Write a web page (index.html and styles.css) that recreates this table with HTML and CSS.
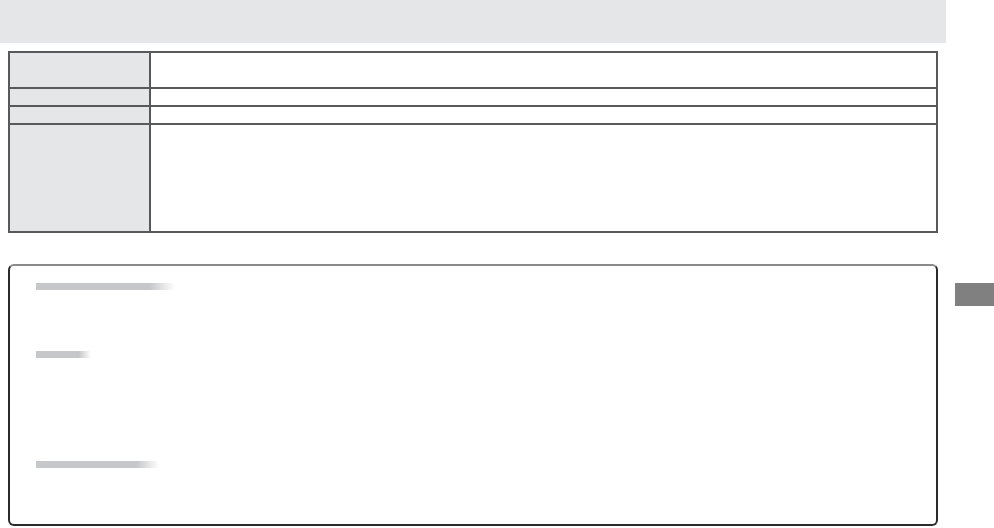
FILE: index.html
```html
<!DOCTYPE html>
<html lang="en">
<head>
    <meta charset="UTF-8">
    <meta name="viewport" content="width=device-width, initial-scale=1.0">
    <title>manual page</title>
    <link rel="stylesheet" href="styles.css">
</head>
<body>
    <div class="page">
        <main class="main">
            <div class="banner"></div>

            <div class="spec">
                <div class="spec-key row-tall"></div>
                <div class="spec-val"></div>
                <div class="spec-key"></div>
                <div class="spec-val"></div>
                <div class="spec-key"></div>
                <div class="spec-val"></div>
                <div class="spec-key row-big"></div>
                <div class="spec-val"></div>
            </div>

            <div class="notes">
                <section class="note note-first">
                    <div class="heading-bar bar-long"></div>
                </section>
                <section class="note note-second">
                    <div class="heading-bar bar-short"></div>
                </section>
                <section class="note">
                    <div class="heading-bar bar-mid"></div>
                </section>
            </div>
        </main>

        <aside class="side">
            <div class="tab"></div>
        </aside>
    </div>
</body>
</html>
```

FILE: styles.css
```css
body {
    font-family: "Liberation Sans", Arial, sans-serif;
    background-color: #fff;
    margin: 0;
    padding: 0;
}

.page {
    display: flex;
    width: 994px;
    height: 528px;
}

.main {
    width: 946px;
    flex: none;
}

.banner {
    height: 43px;
    background-color: #e5e6e8;
}

/* spec table */
.spec {
    display: grid;
    grid-template-columns: 139px 1fr;
    grid-template-rows: 34px 16px 16px 106px;
    gap: 2px;
    padding: 2px;
    width: 926px;
    margin: 8px 0 0 8px;
    background-color: #58595b;
}

.spec-key {
    background-color: #e5e6e8;
}

.spec-val {
    background-color: #fff;
}

/* notes box */
.notes {
    width: 926px;
    height: 258px;
    margin: 31px 0 0 8px;
    border: 2px solid #2b2b2b;
    border-top-color: #8a8a8a;
    border-radius: 6px;
    padding: 0 26px;
    box-sizing: content-box;
    width: 874px;
}

.note {
    padding-top: 0;
}

.note-first {
    height: 68px;
    padding-top: 17px;
}

.note-second {
    height: 110px;
}

.heading-bar {
    height: 7px;
}

.bar-long {
    width: 139px;
    background: linear-gradient(to right, #c6c7c9 0, #c6c7c9 82%, #fff 100%);
}

.bar-short {
    width: 55px;
    background: linear-gradient(to right, #c6c7c9 0, #c6c7c9 78%, #fff 100%);
}

.bar-mid {
    width: 123px;
    background: linear-gradient(to right, #c6c7c9 0, #c6c7c9 82%, #fff 100%);
}

/* side index tab */
.side {
    flex: 1;
    padding: 283px 0 0 9px;
}

.tab {
    height: 23px;
    background-color: #808080;
}
```
